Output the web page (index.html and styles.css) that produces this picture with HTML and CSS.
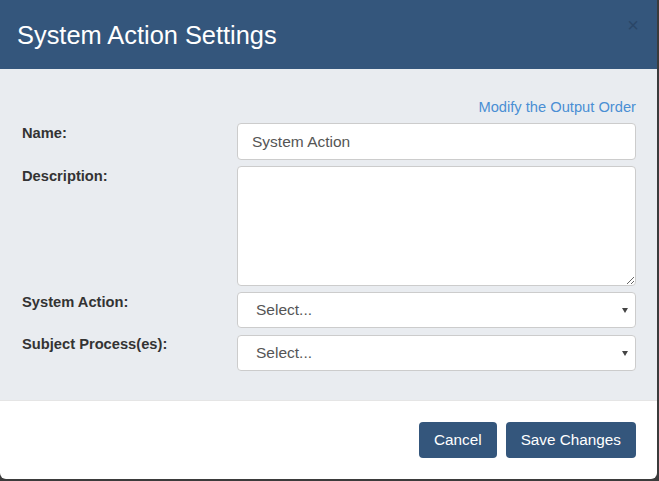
FILE: index.html
```html
<!DOCTYPE html>
<html>
<head>
<meta charset="utf-8">
<link rel="stylesheet" href="styles.css">
</head>
<body>
<div class="modal">
  <div class="modal-header">
    <h1 class="modal-title">System Action Settings</h1>
    <span class="close">×</span>
  </div>
  <div class="modal-body">
    <div class="link-row"><a class="link">Modify the Output Order</a></div>
    <div class="form">
      <label class="label">Name:</label>
      <input class="input" type="text" value="System Action">
      <label class="label">Description:</label>
      <textarea class="textarea"></textarea>
      <label class="label">System Action:</label>
      <div class="select"><span>Select...</span><span class="caret"></span></div>
      <label class="label">Subject Process(es):</label>
      <div class="select"><span>Select...</span><span class="caret"></span></div>
    </div>
  </div>
  <div class="modal-footer">
    <button class="btn">Cancel</button>
    <button class="btn">Save Changes</button>
  </div>
</div>
</body>
</html>
```
FILE: styles.css
```css
html, body {
  margin: 0;
  padding: 0;
  background: #3b3b3b;
  font-family: "Liberation Sans", Arial, sans-serif;
}
.modal {
  width: 657px;
  height: 479px;
  background: #fff;
  border-radius: 0 0 6px 6px;
  overflow: hidden;
  display: flex;
  flex-direction: column;
}
.modal-header {
  height: 69px;
  flex: none;
  background: #34567c;
  box-sizing: border-box;
  padding: 0 18px 0 17px;
  display: flex;
  justify-content: space-between;
  align-items: center;
}
.modal-title {
  margin: 0;
  font-size: 25.4px;
  font-weight: normal;
  color: #fff;
  line-height: 30px;
}
.close {
  align-self: flex-start;
  margin-top: 15px;
  font-size: 20px;
  font-weight: normal;
  line-height: 20px;
  color: #2a4668;
}
.modal-body {
  flex: 1;
  background: #e9ecf0;
  padding: 28px 21px 0 22px;
}
.link-row {
  display: flex;
  justify-content: flex-end;
  margin-bottom: 6px;
}
.link {
  font-size: 14.7px;
  line-height: 20px;
  color: #4a8fd4;
}
.form {
  display: grid;
  grid-template-columns: 215px 1fr;
  row-gap: 6px;
}
.label {
  font-size: 14.7px;
  font-weight: bold;
  line-height: 20px;
  color: #333;
}
.input, .textarea, .select {
  box-sizing: border-box;
  width: 100%;
  border: 1px solid #ccc;
  border-radius: 4px;
  background: #fff;
  font-family: "Liberation Sans", Arial, sans-serif;
  font-size: 15.5px;
  color: #555;
  margin: 0;
}
.input {
  height: 37px;
  padding: 0 14px;
  outline: none;
}
.textarea {
  height: 120px;
  padding: 6px 14px;
  display: block;
}
.select {
  height: 36px;
  padding: 0 7px 0 18px;
  display: flex;
  align-items: center;
  justify-content: space-between;
}
.select + .label + .select {
  margin-top: 1px;
}
.caret {
  width: 0;
  height: 0;
  border-left: 3px solid transparent;
  border-right: 3px solid transparent;
  border-top: 5px solid #444;
}
.modal-footer {
  flex: none;
  border-top: 1px solid #e5e5e5;
  padding: 21px 21px;
  display: flex;
  justify-content: flex-end;
  gap: 9px;
}
.btn {
  height: 36px;
  padding: 0 15px;
  border: none;
  border-radius: 4px;
  background: #34567c;
  color: #fff;
  font-family: "Liberation Sans", Arial, sans-serif;
  font-size: 15.3px;
}
```
